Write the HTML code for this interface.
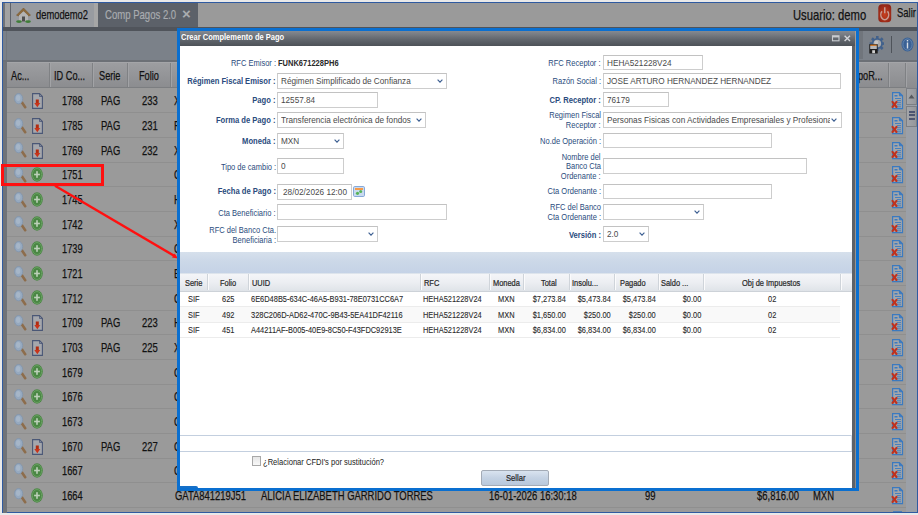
<!DOCTYPE html><html><head><meta charset='utf-8'><style>
*{margin:0;padding:0;box-sizing:border-box}
html,body{width:918px;height:515px;overflow:hidden;background:#fff;font-family:"Liberation Sans",sans-serif}
.a{position:absolute}
.t{position:absolute;white-space:nowrap;transform-origin:0 0;line-height:1}
.tr{position:absolute;white-space:nowrap;transform-origin:100% 0;line-height:1;text-align:right}
</style></head><body><div class="a" style="left:0px;top:0px;width:918px;height:515px;background:#e9e9e9"></div>
<div class="a" style="left:2px;top:2px;width:916px;height:511px;background:#2f5aa0"></div>
<div class="a" style="left:3px;top:3px;width:914px;height:509px;background:#9a9a9a"></div>
<div class="a" style="left:3px;top:3px;width:2px;height:24px;background:#707378"></div>
<div class="a" style="left:5px;top:3px;width:5px;height:24px;background:#a2a2a2"></div>
<div class="a" style="left:10px;top:3px;width:1px;height:24px;background:#5f636a"></div>
<div class="a" style="left:11px;top:3px;width:83px;height:24px;background:#989ba0"></div>
<div class="a" style="left:94px;top:3px;width:4px;height:24px;background:#a6a6a6"></div>
<div class="a" style="left:98px;top:3px;width:100px;height:24px;background:#5c6169"></div>
<div class="a" style="left:3px;top:27px;width:914px;height:4px;background:#50545b"></div>
<div class="a" style="left:3px;top:31px;width:914px;height:30px;background:#7b8189"></div>
<div class="a" style="left:6px;top:31px;width:1px;height:29px;background:#72777e"></div>
<div class="a" style="left:3px;top:62px;width:3px;height:451px;background:#6d7176"></div>
<div class="a" style="left:3px;top:59.5px;width:914px;height:2.5px;background:#6c7076"></div>
<div class="a" style="left:7px;top:62px;width:910px;height:26px;background:linear-gradient(#9d9ea1,#949598 50%,#8b8c8f)"></div>
<div class="a" style="left:7px;top:62px;width:910px;height:1px;background:#a4a5a8"></div>
<div class="a" style="left:3px;top:62px;width:4px;height:451px;background:#707378"></div>
<div class="a" style="left:7px;top:87px;width:899px;height:1px;background:#7c7e81"></div>
<div class="a" style="left:49px;top:63px;width:1px;height:24px;background:#7f8184"></div>
<div class="a" style="left:50px;top:63px;width:1px;height:24px;background:#a2a3a6"></div>
<div class="a" style="left:92px;top:63px;width:1px;height:24px;background:#7f8184"></div>
<div class="a" style="left:93px;top:63px;width:1px;height:24px;background:#a2a3a6"></div>
<div class="a" style="left:127px;top:63px;width:1px;height:24px;background:#7f8184"></div>
<div class="a" style="left:128px;top:63px;width:1px;height:24px;background:#a2a3a6"></div>
<div class="a" style="left:170px;top:63px;width:1px;height:24px;background:#7f8184"></div>
<div class="a" style="left:171px;top:63px;width:1px;height:24px;background:#a2a3a6"></div>
<div class="a" style="left:888px;top:63px;width:1px;height:24px;background:#7f8184"></div>
<div class="a" style="left:889px;top:63px;width:1px;height:24px;background:#a2a3a6"></div>
<div class="a" style="left:905px;top:63px;width:1px;height:24px;background:#7f8184"></div>
<div class="a" style="left:906px;top:63px;width:1px;height:24px;background:#a2a3a6"></div>
<div class="a" style="left:7px;top:112.3px;width:899px;height:1px;background:#8f8f8f"></div>
<div class="a" style="left:7px;top:136.97px;width:899px;height:1px;background:#8f8f8f"></div>
<div class="a" style="left:7px;top:161.64000000000001px;width:899px;height:1px;background:#8f8f8f"></div>
<div class="a" style="left:7px;top:186.31px;width:899px;height:1px;background:#8f8f8f"></div>
<div class="a" style="left:7px;top:210.98000000000002px;width:899px;height:1px;background:#8f8f8f"></div>
<div class="a" style="left:7px;top:235.65000000000003px;width:899px;height:1px;background:#8f8f8f"></div>
<div class="a" style="left:7px;top:260.32px;width:899px;height:1px;background:#8f8f8f"></div>
<div class="a" style="left:7px;top:284.99px;width:899px;height:1px;background:#8f8f8f"></div>
<div class="a" style="left:7px;top:309.66px;width:899px;height:1px;background:#8f8f8f"></div>
<div class="a" style="left:7px;top:334.33000000000004px;width:899px;height:1px;background:#8f8f8f"></div>
<div class="a" style="left:7px;top:359.00000000000006px;width:899px;height:1px;background:#8f8f8f"></div>
<div class="a" style="left:7px;top:383.67px;width:899px;height:1px;background:#8f8f8f"></div>
<div class="a" style="left:7px;top:408.34000000000003px;width:899px;height:1px;background:#8f8f8f"></div>
<div class="a" style="left:7px;top:433.01000000000005px;width:899px;height:1px;background:#8f8f8f"></div>
<div class="a" style="left:7px;top:457.68px;width:899px;height:1px;background:#8f8f8f"></div>
<div class="a" style="left:7px;top:482.35px;width:899px;height:1px;background:#8f8f8f"></div>
<div class="a" style="left:7px;top:507.02000000000004px;width:899px;height:1px;background:#8f8f8f"></div>
<svg class="a" style="left:16px;top:7px" width="15" height="16" viewBox="0 0 15 16"><path d="M7.5 1 L14.5 8.2 L12.5 9 L7.5 4 L2.5 9 L0.5 8.2 Z" fill="#8c6a3c" stroke="#7a5a30" stroke-width=".6"/><path d="M3 8.6 L7.5 4.3 L12 8.6 V14.5 H3 Z" fill="#b3b3b3"/><rect x="6" y="9.5" width="3" height="5" fill="#4f4f4f"/><ellipse cx="3" cy="14.6" rx="2.9" ry="1.4" fill="#3f7d38"/><ellipse cx="12" cy="14.6" rx="2.9" ry="1.4" fill="#3f7d38"/></svg>
<div class="t" style="left:35.6px;top:8px;font-size:13px;color:#111;transform:scaleX(0.72);-webkit-text-stroke:.25px #111">demodemo2</div>
<div class="t" style="left:105px;top:8px;font-size:13px;color:#a9acb0;transform:scaleX(0.735);-webkit-text-stroke:.2px #a9acb0">Comp Pagos 2.0</div>
<div class="t" style="left:182px;top:6px;font-size:15px;color:#a9acb0;font-weight:bold;transform:scaleX(1.0);">&#215;</div>
<div class="t" style="left:792.6px;top:6.95px;font-size:15px;color:#111;transform:scaleX(0.75);-webkit-text-stroke:0.25px #111">Usuario: demo</div>
<svg class="a" style="left:878px;top:4px" width="13.5" height="18.5" viewBox="0 0 13.5 18.5"><defs><radialGradient id="pw" cx="50%" cy="55%" r="60%"><stop offset="0" stop-color="#c8401e"/><stop offset="1" stop-color="#8e2416"/></radialGradient></defs><rect x="0.3" y="0.3" width="12.9" height="17.9" rx="3.8" fill="url(#pw)"/><path d="M4 7.2 A3.9 5 0 1 0 9.5 7.2" fill="none" stroke="#c79c92" stroke-width="1.5"/><line x1="6.75" y1="3.2" x2="6.75" y2="9.2" stroke="#c79c92" stroke-width="1.5"/></svg>
<div class="t" style="left:897px;top:6.15px;font-size:13.5px;color:#111;transform:scaleX(0.7);-webkit-text-stroke:0.25px #111">Salir</div>
<svg class="a" style="left:869px;top:35px" width="15" height="19" viewBox="0 0 15 19"><g transform="translate(8.3 8.6)"><g fill="#41618c"><rect x="-1.3" y="-7.6" width="2.6" height="15.2"/><rect x="-1.3" y="-7.6" width="2.6" height="15.2" transform="rotate(45)"/><rect x="-1.3" y="-7.6" width="2.6" height="15.2" transform="rotate(90)"/><rect x="-1.3" y="-7.6" width="2.6" height="15.2" transform="rotate(135)"/></g><circle r="5.6" fill="#41618c"/><circle r="3.8" fill="#a9a9a9"/><circle cx="-1" cy="-1" r="2" fill="#c4c4c4"/></g><rect x="0.3" y="9.2" width="8.4" height="9.3" fill="#1d1d1d"/><rect x="1.2" y="9.6" width="6.6" height="1.4" fill="#c8782e"/><rect x="1.2" y="11" width="6.6" height="3" fill="#b8b8b8"/><rect x="3.2" y="15.2" width="2.8" height="3" fill="#cfcfcf"/></svg>
<div class="a" style="left:891px;top:36px;width:1px;height:17px;background:#4e535a"></div>
<div class="a" style="left:859px;top:31px;width:4px;height:28px;background:#70757c"></div>
<svg class="a" style="left:901px;top:37px" width="13" height="15" viewBox="0 0 13 15"><ellipse cx="6.5" cy="7.5" rx="6" ry="7" fill="#3a6195"/><ellipse cx="6.5" cy="7.5" rx="4.6" ry="5.6" fill="none" stroke="#6d8db3" stroke-width=".8"/><rect x="5.8" y="3" width="1.4" height="1.4" fill="#d8dde3"/><rect x="5.8" y="5.5" width="1.4" height="6" fill="#d8dde3"/></svg>
<div class="t" style="left:11px;top:69.85px;font-size:12.7px;color:#111;transform:scaleX(0.725);-webkit-text-stroke:0.25px #111">Ac...</div>
<div class="t" style="left:54px;top:69.85px;font-size:12.7px;color:#111;transform:scaleX(0.725);-webkit-text-stroke:0.25px #111">ID Co...</div>
<div class="t" style="left:99.4px;top:69.85px;font-size:12.7px;color:#111;transform:scaleX(0.725);-webkit-text-stroke:0.25px #111">Serie</div>
<div class="t" style="left:139.3px;top:69.85px;font-size:12.7px;color:#111;transform:scaleX(0.725);-webkit-text-stroke:0.25px #111">Folio</div>
<div class="t" style="left:857.5px;top:69.85px;font-size:12.7px;color:#111;transform:scaleX(0.725);-webkit-text-stroke:0.25px #111">poR...</div>
<div class="t" style="left:61.8px;top:94.34px;font-size:13.5px;color:#111;transform:scaleX(0.685);-webkit-text-stroke:0.25px #111">1788</div>
<div class="t" style="left:101px;top:94.34px;font-size:13.5px;color:#111;transform:scaleX(0.7);-webkit-text-stroke:0.25px #111">PAG</div>
<div class="t" style="left:141.5px;top:94.34px;font-size:13.5px;color:#111;transform:scaleX(0.7);-webkit-text-stroke:0.25px #111">233</div>
<div class="t" style="left:174px;top:94.34px;font-size:13.5px;color:#111;transform:scaleX(0.7);-webkit-text-stroke:0.25px #111">X</div>
<svg class="a" style="left:14px;top:93.0px" width="13" height="16" viewBox="0 0 13 16"><line x1="8" y1="9.5" x2="11.2" y2="14.2" stroke="#8d6d4c" stroke-width="2.6" stroke-linecap="round"/><ellipse cx="4.6" cy="5.6" rx="4.1" ry="5.2" fill="#96a9bf" stroke="#8296ad" stroke-width=".8"/><ellipse cx="4.2" cy="5" rx="2.2" ry="3" fill="#a6b6c8"/></svg>
<svg class="a" style="left:32px;top:93.4px" width="11" height="16" viewBox="0 0 11 16"><path d="M0.6 0.6 H7.5 L10.4 3.5 V15.4 H0.6 Z" fill="#a5a7ac" stroke="#4a5776" stroke-width="1.1"/><path d="M7.5 0.6 V3.5 H10.4" fill="none" stroke="#4a5776" stroke-width=".8"/><rect x="3.8" y="6.5" width="3" height="4" fill="#b22c10"/><path d="M2.3 10 H8.3 L5.3 14.2 Z" fill="#c8341a"/></svg>
<svg class="a" style="left:891px;top:92.3px" width="13" height="18" viewBox="0 0 13 18"><path d="M1.6 0.7 H8.4 L11.5 3.8 V16.6 H1.6 Z" fill="#a3a6aa" stroke="#3b7ac0" stroke-width="1.2"/><path d="M8.4 0.7 V3.8 H11.5" fill="#3b7ac0" stroke="#3b7ac0" stroke-width="1"/><rect x="3.5" y="3" width="3" height="1.5" fill="#3b7ac0"/><g stroke="#3b7ac0" stroke-width=".9"><line x1="4" y1="6.5" x2="10" y2="6.5"/><line x1="6" y1="8.6" x2="10" y2="8.6"/><line x1="6" y1="10.7" x2="10" y2="10.7"/><line x1="6" y1="12.8" x2="10" y2="12.8"/><line x1="4" y1="14.8" x2="10" y2="14.8"/></g><g stroke="#c0321e" stroke-width="2.1" stroke-linecap="round"><line x1="1.5" y1="9.8" x2="5.5" y2="15"/><line x1="5.5" y1="9.8" x2="1.5" y2="15"/></g></svg>
<div class="t" style="left:61.8px;top:119.02px;font-size:13.5px;color:#111;transform:scaleX(0.685);-webkit-text-stroke:0.25px #111">1785</div>
<div class="t" style="left:101px;top:119.02px;font-size:13.5px;color:#111;transform:scaleX(0.7);-webkit-text-stroke:0.25px #111">PAG</div>
<div class="t" style="left:141.5px;top:119.02px;font-size:13.5px;color:#111;transform:scaleX(0.7);-webkit-text-stroke:0.25px #111">231</div>
<div class="t" style="left:174px;top:119.02px;font-size:13.5px;color:#111;transform:scaleX(0.7);-webkit-text-stroke:0.25px #111">F</div>
<svg class="a" style="left:14px;top:117.7px" width="13" height="16" viewBox="0 0 13 16"><line x1="8" y1="9.5" x2="11.2" y2="14.2" stroke="#8d6d4c" stroke-width="2.6" stroke-linecap="round"/><ellipse cx="4.6" cy="5.6" rx="4.1" ry="5.2" fill="#96a9bf" stroke="#8296ad" stroke-width=".8"/><ellipse cx="4.2" cy="5" rx="2.2" ry="3" fill="#a6b6c8"/></svg>
<svg class="a" style="left:32px;top:118.1px" width="11" height="16" viewBox="0 0 11 16"><path d="M0.6 0.6 H7.5 L10.4 3.5 V15.4 H0.6 Z" fill="#a5a7ac" stroke="#4a5776" stroke-width="1.1"/><path d="M7.5 0.6 V3.5 H10.4" fill="none" stroke="#4a5776" stroke-width=".8"/><rect x="3.8" y="6.5" width="3" height="4" fill="#b22c10"/><path d="M2.3 10 H8.3 L5.3 14.2 Z" fill="#c8341a"/></svg>
<svg class="a" style="left:891px;top:117.0px" width="13" height="18" viewBox="0 0 13 18"><path d="M1.6 0.7 H8.4 L11.5 3.8 V16.6 H1.6 Z" fill="#a3a6aa" stroke="#3b7ac0" stroke-width="1.2"/><path d="M8.4 0.7 V3.8 H11.5" fill="#3b7ac0" stroke="#3b7ac0" stroke-width="1"/><rect x="3.5" y="3" width="3" height="1.5" fill="#3b7ac0"/><g stroke="#3b7ac0" stroke-width=".9"><line x1="4" y1="6.5" x2="10" y2="6.5"/><line x1="6" y1="8.6" x2="10" y2="8.6"/><line x1="6" y1="10.7" x2="10" y2="10.7"/><line x1="6" y1="12.8" x2="10" y2="12.8"/><line x1="4" y1="14.8" x2="10" y2="14.8"/></g><g stroke="#c0321e" stroke-width="2.1" stroke-linecap="round"><line x1="1.5" y1="9.8" x2="5.5" y2="15"/><line x1="5.5" y1="9.8" x2="1.5" y2="15"/></g></svg>
<div class="t" style="left:61.8px;top:143.69px;font-size:13.5px;color:#111;transform:scaleX(0.685);-webkit-text-stroke:0.25px #111">1769</div>
<div class="t" style="left:101px;top:143.69px;font-size:13.5px;color:#111;transform:scaleX(0.7);-webkit-text-stroke:0.25px #111">PAG</div>
<div class="t" style="left:141.5px;top:143.69px;font-size:13.5px;color:#111;transform:scaleX(0.7);-webkit-text-stroke:0.25px #111">232</div>
<div class="t" style="left:174px;top:143.69px;font-size:13.5px;color:#111;transform:scaleX(0.7);-webkit-text-stroke:0.25px #111">X</div>
<svg class="a" style="left:14px;top:142.3px" width="13" height="16" viewBox="0 0 13 16"><line x1="8" y1="9.5" x2="11.2" y2="14.2" stroke="#8d6d4c" stroke-width="2.6" stroke-linecap="round"/><ellipse cx="4.6" cy="5.6" rx="4.1" ry="5.2" fill="#96a9bf" stroke="#8296ad" stroke-width=".8"/><ellipse cx="4.2" cy="5" rx="2.2" ry="3" fill="#a6b6c8"/></svg>
<svg class="a" style="left:32px;top:142.7px" width="11" height="16" viewBox="0 0 11 16"><path d="M0.6 0.6 H7.5 L10.4 3.5 V15.4 H0.6 Z" fill="#a5a7ac" stroke="#4a5776" stroke-width="1.1"/><path d="M7.5 0.6 V3.5 H10.4" fill="none" stroke="#4a5776" stroke-width=".8"/><rect x="3.8" y="6.5" width="3" height="4" fill="#b22c10"/><path d="M2.3 10 H8.3 L5.3 14.2 Z" fill="#c8341a"/></svg>
<svg class="a" style="left:891px;top:141.6px" width="13" height="18" viewBox="0 0 13 18"><path d="M1.6 0.7 H8.4 L11.5 3.8 V16.6 H1.6 Z" fill="#a3a6aa" stroke="#3b7ac0" stroke-width="1.2"/><path d="M8.4 0.7 V3.8 H11.5" fill="#3b7ac0" stroke="#3b7ac0" stroke-width="1"/><rect x="3.5" y="3" width="3" height="1.5" fill="#3b7ac0"/><g stroke="#3b7ac0" stroke-width=".9"><line x1="4" y1="6.5" x2="10" y2="6.5"/><line x1="6" y1="8.6" x2="10" y2="8.6"/><line x1="6" y1="10.7" x2="10" y2="10.7"/><line x1="6" y1="12.8" x2="10" y2="12.8"/><line x1="4" y1="14.8" x2="10" y2="14.8"/></g><g stroke="#c0321e" stroke-width="2.1" stroke-linecap="round"><line x1="1.5" y1="9.8" x2="5.5" y2="15"/><line x1="5.5" y1="9.8" x2="1.5" y2="15"/></g></svg>
<div class="t" style="left:61.8px;top:168.35px;font-size:13.5px;color:#111;transform:scaleX(0.685);-webkit-text-stroke:0.25px #111">1751</div>
<div class="t" style="left:174px;top:168.35px;font-size:13.5px;color:#111;transform:scaleX(0.7);-webkit-text-stroke:0.25px #111">C</div>
<svg class="a" style="left:14px;top:167.0px" width="13" height="16" viewBox="0 0 13 16"><line x1="8" y1="9.5" x2="11.2" y2="14.2" stroke="#8d6d4c" stroke-width="2.6" stroke-linecap="round"/><ellipse cx="4.6" cy="5.6" rx="4.1" ry="5.2" fill="#96a9bf" stroke="#8296ad" stroke-width=".8"/><ellipse cx="4.2" cy="5" rx="2.2" ry="3" fill="#a6b6c8"/></svg>
<svg class="a" style="left:31px;top:166.8px" width="12" height="15" viewBox="0 0 12 15"><ellipse cx="6" cy="7.5" rx="5.8" ry="7.2" fill="#4a8744"/><ellipse cx="6" cy="7.5" rx="4.7" ry="6" fill="none" stroke="#6da566" stroke-width=".8"/><rect x="5.2" y="4.2" width="1.6" height="6.6" fill="#bcd0b9"/><rect x="3.1" y="6.7" width="5.8" height="1.6" fill="#bcd0b9"/></svg>
<svg class="a" style="left:891px;top:166.3px" width="13" height="18" viewBox="0 0 13 18"><path d="M1.6 0.7 H8.4 L11.5 3.8 V16.6 H1.6 Z" fill="#a3a6aa" stroke="#3b7ac0" stroke-width="1.2"/><path d="M8.4 0.7 V3.8 H11.5" fill="#3b7ac0" stroke="#3b7ac0" stroke-width="1"/><rect x="3.5" y="3" width="3" height="1.5" fill="#3b7ac0"/><g stroke="#3b7ac0" stroke-width=".9"><line x1="4" y1="6.5" x2="10" y2="6.5"/><line x1="6" y1="8.6" x2="10" y2="8.6"/><line x1="6" y1="10.7" x2="10" y2="10.7"/><line x1="6" y1="12.8" x2="10" y2="12.8"/><line x1="4" y1="14.8" x2="10" y2="14.8"/></g><g stroke="#c0321e" stroke-width="2.1" stroke-linecap="round"><line x1="1.5" y1="9.8" x2="5.5" y2="15"/><line x1="5.5" y1="9.8" x2="1.5" y2="15"/></g></svg>
<div class="t" style="left:61.8px;top:193.03px;font-size:13.5px;color:#111;transform:scaleX(0.685);-webkit-text-stroke:0.25px #111">1745</div>
<div class="t" style="left:174px;top:193.03px;font-size:13.5px;color:#111;transform:scaleX(0.7);-webkit-text-stroke:0.25px #111">H</div>
<svg class="a" style="left:14px;top:191.7px" width="13" height="16" viewBox="0 0 13 16"><line x1="8" y1="9.5" x2="11.2" y2="14.2" stroke="#8d6d4c" stroke-width="2.6" stroke-linecap="round"/><ellipse cx="4.6" cy="5.6" rx="4.1" ry="5.2" fill="#96a9bf" stroke="#8296ad" stroke-width=".8"/><ellipse cx="4.2" cy="5" rx="2.2" ry="3" fill="#a6b6c8"/></svg>
<svg class="a" style="left:31px;top:191.5px" width="12" height="15" viewBox="0 0 12 15"><ellipse cx="6" cy="7.5" rx="5.8" ry="7.2" fill="#4a8744"/><ellipse cx="6" cy="7.5" rx="4.7" ry="6" fill="none" stroke="#6da566" stroke-width=".8"/><rect x="5.2" y="4.2" width="1.6" height="6.6" fill="#bcd0b9"/><rect x="3.1" y="6.7" width="5.8" height="1.6" fill="#bcd0b9"/></svg>
<svg class="a" style="left:891px;top:191.0px" width="13" height="18" viewBox="0 0 13 18"><path d="M1.6 0.7 H8.4 L11.5 3.8 V16.6 H1.6 Z" fill="#a3a6aa" stroke="#3b7ac0" stroke-width="1.2"/><path d="M8.4 0.7 V3.8 H11.5" fill="#3b7ac0" stroke="#3b7ac0" stroke-width="1"/><rect x="3.5" y="3" width="3" height="1.5" fill="#3b7ac0"/><g stroke="#3b7ac0" stroke-width=".9"><line x1="4" y1="6.5" x2="10" y2="6.5"/><line x1="6" y1="8.6" x2="10" y2="8.6"/><line x1="6" y1="10.7" x2="10" y2="10.7"/><line x1="6" y1="12.8" x2="10" y2="12.8"/><line x1="4" y1="14.8" x2="10" y2="14.8"/></g><g stroke="#c0321e" stroke-width="2.1" stroke-linecap="round"><line x1="1.5" y1="9.8" x2="5.5" y2="15"/><line x1="5.5" y1="9.8" x2="1.5" y2="15"/></g></svg>
<div class="t" style="left:61.8px;top:217.7px;font-size:13.5px;color:#111;transform:scaleX(0.685);-webkit-text-stroke:0.25px #111">1742</div>
<div class="t" style="left:174px;top:217.7px;font-size:13.5px;color:#111;transform:scaleX(0.7);-webkit-text-stroke:0.25px #111">X</div>
<svg class="a" style="left:14px;top:216.4px" width="13" height="16" viewBox="0 0 13 16"><line x1="8" y1="9.5" x2="11.2" y2="14.2" stroke="#8d6d4c" stroke-width="2.6" stroke-linecap="round"/><ellipse cx="4.6" cy="5.6" rx="4.1" ry="5.2" fill="#96a9bf" stroke="#8296ad" stroke-width=".8"/><ellipse cx="4.2" cy="5" rx="2.2" ry="3" fill="#a6b6c8"/></svg>
<svg class="a" style="left:31px;top:216.2px" width="12" height="15" viewBox="0 0 12 15"><ellipse cx="6" cy="7.5" rx="5.8" ry="7.2" fill="#4a8744"/><ellipse cx="6" cy="7.5" rx="4.7" ry="6" fill="none" stroke="#6da566" stroke-width=".8"/><rect x="5.2" y="4.2" width="1.6" height="6.6" fill="#bcd0b9"/><rect x="3.1" y="6.7" width="5.8" height="1.6" fill="#bcd0b9"/></svg>
<svg class="a" style="left:891px;top:215.7px" width="13" height="18" viewBox="0 0 13 18"><path d="M1.6 0.7 H8.4 L11.5 3.8 V16.6 H1.6 Z" fill="#a3a6aa" stroke="#3b7ac0" stroke-width="1.2"/><path d="M8.4 0.7 V3.8 H11.5" fill="#3b7ac0" stroke="#3b7ac0" stroke-width="1"/><rect x="3.5" y="3" width="3" height="1.5" fill="#3b7ac0"/><g stroke="#3b7ac0" stroke-width=".9"><line x1="4" y1="6.5" x2="10" y2="6.5"/><line x1="6" y1="8.6" x2="10" y2="8.6"/><line x1="6" y1="10.7" x2="10" y2="10.7"/><line x1="6" y1="12.8" x2="10" y2="12.8"/><line x1="4" y1="14.8" x2="10" y2="14.8"/></g><g stroke="#c0321e" stroke-width="2.1" stroke-linecap="round"><line x1="1.5" y1="9.8" x2="5.5" y2="15"/><line x1="5.5" y1="9.8" x2="1.5" y2="15"/></g></svg>
<div class="t" style="left:61.8px;top:242.37px;font-size:13.5px;color:#111;transform:scaleX(0.685);-webkit-text-stroke:0.25px #111">1739</div>
<div class="t" style="left:174px;top:242.37px;font-size:13.5px;color:#111;transform:scaleX(0.7);-webkit-text-stroke:0.25px #111">C</div>
<svg class="a" style="left:14px;top:241.0px" width="13" height="16" viewBox="0 0 13 16"><line x1="8" y1="9.5" x2="11.2" y2="14.2" stroke="#8d6d4c" stroke-width="2.6" stroke-linecap="round"/><ellipse cx="4.6" cy="5.6" rx="4.1" ry="5.2" fill="#96a9bf" stroke="#8296ad" stroke-width=".8"/><ellipse cx="4.2" cy="5" rx="2.2" ry="3" fill="#a6b6c8"/></svg>
<svg class="a" style="left:31px;top:240.8px" width="12" height="15" viewBox="0 0 12 15"><ellipse cx="6" cy="7.5" rx="5.8" ry="7.2" fill="#4a8744"/><ellipse cx="6" cy="7.5" rx="4.7" ry="6" fill="none" stroke="#6da566" stroke-width=".8"/><rect x="5.2" y="4.2" width="1.6" height="6.6" fill="#bcd0b9"/><rect x="3.1" y="6.7" width="5.8" height="1.6" fill="#bcd0b9"/></svg>
<svg class="a" style="left:891px;top:240.3px" width="13" height="18" viewBox="0 0 13 18"><path d="M1.6 0.7 H8.4 L11.5 3.8 V16.6 H1.6 Z" fill="#a3a6aa" stroke="#3b7ac0" stroke-width="1.2"/><path d="M8.4 0.7 V3.8 H11.5" fill="#3b7ac0" stroke="#3b7ac0" stroke-width="1"/><rect x="3.5" y="3" width="3" height="1.5" fill="#3b7ac0"/><g stroke="#3b7ac0" stroke-width=".9"><line x1="4" y1="6.5" x2="10" y2="6.5"/><line x1="6" y1="8.6" x2="10" y2="8.6"/><line x1="6" y1="10.7" x2="10" y2="10.7"/><line x1="6" y1="12.8" x2="10" y2="12.8"/><line x1="4" y1="14.8" x2="10" y2="14.8"/></g><g stroke="#c0321e" stroke-width="2.1" stroke-linecap="round"><line x1="1.5" y1="9.8" x2="5.5" y2="15"/><line x1="5.5" y1="9.8" x2="1.5" y2="15"/></g></svg>
<div class="t" style="left:61.8px;top:267.04px;font-size:13.5px;color:#111;transform:scaleX(0.685);-webkit-text-stroke:0.25px #111">1721</div>
<div class="t" style="left:174px;top:267.04px;font-size:13.5px;color:#111;transform:scaleX(0.7);-webkit-text-stroke:0.25px #111">E</div>
<svg class="a" style="left:14px;top:265.7px" width="13" height="16" viewBox="0 0 13 16"><line x1="8" y1="9.5" x2="11.2" y2="14.2" stroke="#8d6d4c" stroke-width="2.6" stroke-linecap="round"/><ellipse cx="4.6" cy="5.6" rx="4.1" ry="5.2" fill="#96a9bf" stroke="#8296ad" stroke-width=".8"/><ellipse cx="4.2" cy="5" rx="2.2" ry="3" fill="#a6b6c8"/></svg>
<svg class="a" style="left:31px;top:265.5px" width="12" height="15" viewBox="0 0 12 15"><ellipse cx="6" cy="7.5" rx="5.8" ry="7.2" fill="#4a8744"/><ellipse cx="6" cy="7.5" rx="4.7" ry="6" fill="none" stroke="#6da566" stroke-width=".8"/><rect x="5.2" y="4.2" width="1.6" height="6.6" fill="#bcd0b9"/><rect x="3.1" y="6.7" width="5.8" height="1.6" fill="#bcd0b9"/></svg>
<svg class="a" style="left:891px;top:265.0px" width="13" height="18" viewBox="0 0 13 18"><path d="M1.6 0.7 H8.4 L11.5 3.8 V16.6 H1.6 Z" fill="#a3a6aa" stroke="#3b7ac0" stroke-width="1.2"/><path d="M8.4 0.7 V3.8 H11.5" fill="#3b7ac0" stroke="#3b7ac0" stroke-width="1"/><rect x="3.5" y="3" width="3" height="1.5" fill="#3b7ac0"/><g stroke="#3b7ac0" stroke-width=".9"><line x1="4" y1="6.5" x2="10" y2="6.5"/><line x1="6" y1="8.6" x2="10" y2="8.6"/><line x1="6" y1="10.7" x2="10" y2="10.7"/><line x1="6" y1="12.8" x2="10" y2="12.8"/><line x1="4" y1="14.8" x2="10" y2="14.8"/></g><g stroke="#c0321e" stroke-width="2.1" stroke-linecap="round"><line x1="1.5" y1="9.8" x2="5.5" y2="15"/><line x1="5.5" y1="9.8" x2="1.5" y2="15"/></g></svg>
<div class="t" style="left:61.8px;top:291.71px;font-size:13.5px;color:#111;transform:scaleX(0.685);-webkit-text-stroke:0.25px #111">1712</div>
<div class="t" style="left:174px;top:291.71px;font-size:13.5px;color:#111;transform:scaleX(0.7);-webkit-text-stroke:0.25px #111">C</div>
<svg class="a" style="left:14px;top:290.4px" width="13" height="16" viewBox="0 0 13 16"><line x1="8" y1="9.5" x2="11.2" y2="14.2" stroke="#8d6d4c" stroke-width="2.6" stroke-linecap="round"/><ellipse cx="4.6" cy="5.6" rx="4.1" ry="5.2" fill="#96a9bf" stroke="#8296ad" stroke-width=".8"/><ellipse cx="4.2" cy="5" rx="2.2" ry="3" fill="#a6b6c8"/></svg>
<svg class="a" style="left:31px;top:290.2px" width="12" height="15" viewBox="0 0 12 15"><ellipse cx="6" cy="7.5" rx="5.8" ry="7.2" fill="#4a8744"/><ellipse cx="6" cy="7.5" rx="4.7" ry="6" fill="none" stroke="#6da566" stroke-width=".8"/><rect x="5.2" y="4.2" width="1.6" height="6.6" fill="#bcd0b9"/><rect x="3.1" y="6.7" width="5.8" height="1.6" fill="#bcd0b9"/></svg>
<svg class="a" style="left:891px;top:289.7px" width="13" height="18" viewBox="0 0 13 18"><path d="M1.6 0.7 H8.4 L11.5 3.8 V16.6 H1.6 Z" fill="#a3a6aa" stroke="#3b7ac0" stroke-width="1.2"/><path d="M8.4 0.7 V3.8 H11.5" fill="#3b7ac0" stroke="#3b7ac0" stroke-width="1"/><rect x="3.5" y="3" width="3" height="1.5" fill="#3b7ac0"/><g stroke="#3b7ac0" stroke-width=".9"><line x1="4" y1="6.5" x2="10" y2="6.5"/><line x1="6" y1="8.6" x2="10" y2="8.6"/><line x1="6" y1="10.7" x2="10" y2="10.7"/><line x1="6" y1="12.8" x2="10" y2="12.8"/><line x1="4" y1="14.8" x2="10" y2="14.8"/></g><g stroke="#c0321e" stroke-width="2.1" stroke-linecap="round"><line x1="1.5" y1="9.8" x2="5.5" y2="15"/><line x1="5.5" y1="9.8" x2="1.5" y2="15"/></g></svg>
<div class="t" style="left:61.8px;top:316.38px;font-size:13.5px;color:#111;transform:scaleX(0.685);-webkit-text-stroke:0.25px #111">1709</div>
<div class="t" style="left:101px;top:316.38px;font-size:13.5px;color:#111;transform:scaleX(0.7);-webkit-text-stroke:0.25px #111">PAG</div>
<div class="t" style="left:141.5px;top:316.38px;font-size:13.5px;color:#111;transform:scaleX(0.7);-webkit-text-stroke:0.25px #111">223</div>
<div class="t" style="left:174px;top:316.38px;font-size:13.5px;color:#111;transform:scaleX(0.7);-webkit-text-stroke:0.25px #111">H</div>
<svg class="a" style="left:14px;top:315.0px" width="13" height="16" viewBox="0 0 13 16"><line x1="8" y1="9.5" x2="11.2" y2="14.2" stroke="#8d6d4c" stroke-width="2.6" stroke-linecap="round"/><ellipse cx="4.6" cy="5.6" rx="4.1" ry="5.2" fill="#96a9bf" stroke="#8296ad" stroke-width=".8"/><ellipse cx="4.2" cy="5" rx="2.2" ry="3" fill="#a6b6c8"/></svg>
<svg class="a" style="left:32px;top:315.4px" width="11" height="16" viewBox="0 0 11 16"><path d="M0.6 0.6 H7.5 L10.4 3.5 V15.4 H0.6 Z" fill="#a5a7ac" stroke="#4a5776" stroke-width="1.1"/><path d="M7.5 0.6 V3.5 H10.4" fill="none" stroke="#4a5776" stroke-width=".8"/><rect x="3.8" y="6.5" width="3" height="4" fill="#b22c10"/><path d="M2.3 10 H8.3 L5.3 14.2 Z" fill="#c8341a"/></svg>
<svg class="a" style="left:891px;top:314.3px" width="13" height="18" viewBox="0 0 13 18"><path d="M1.6 0.7 H8.4 L11.5 3.8 V16.6 H1.6 Z" fill="#a3a6aa" stroke="#3b7ac0" stroke-width="1.2"/><path d="M8.4 0.7 V3.8 H11.5" fill="#3b7ac0" stroke="#3b7ac0" stroke-width="1"/><rect x="3.5" y="3" width="3" height="1.5" fill="#3b7ac0"/><g stroke="#3b7ac0" stroke-width=".9"><line x1="4" y1="6.5" x2="10" y2="6.5"/><line x1="6" y1="8.6" x2="10" y2="8.6"/><line x1="6" y1="10.7" x2="10" y2="10.7"/><line x1="6" y1="12.8" x2="10" y2="12.8"/><line x1="4" y1="14.8" x2="10" y2="14.8"/></g><g stroke="#c0321e" stroke-width="2.1" stroke-linecap="round"><line x1="1.5" y1="9.8" x2="5.5" y2="15"/><line x1="5.5" y1="9.8" x2="1.5" y2="15"/></g></svg>
<div class="t" style="left:61.8px;top:341.05px;font-size:13.5px;color:#111;transform:scaleX(0.685);-webkit-text-stroke:0.25px #111">1703</div>
<div class="t" style="left:101px;top:341.05px;font-size:13.5px;color:#111;transform:scaleX(0.7);-webkit-text-stroke:0.25px #111">PAG</div>
<div class="t" style="left:141.5px;top:341.05px;font-size:13.5px;color:#111;transform:scaleX(0.7);-webkit-text-stroke:0.25px #111">225</div>
<div class="t" style="left:174px;top:341.05px;font-size:13.5px;color:#111;transform:scaleX(0.7);-webkit-text-stroke:0.25px #111">X</div>
<svg class="a" style="left:14px;top:339.7px" width="13" height="16" viewBox="0 0 13 16"><line x1="8" y1="9.5" x2="11.2" y2="14.2" stroke="#8d6d4c" stroke-width="2.6" stroke-linecap="round"/><ellipse cx="4.6" cy="5.6" rx="4.1" ry="5.2" fill="#96a9bf" stroke="#8296ad" stroke-width=".8"/><ellipse cx="4.2" cy="5" rx="2.2" ry="3" fill="#a6b6c8"/></svg>
<svg class="a" style="left:32px;top:340.1px" width="11" height="16" viewBox="0 0 11 16"><path d="M0.6 0.6 H7.5 L10.4 3.5 V15.4 H0.6 Z" fill="#a5a7ac" stroke="#4a5776" stroke-width="1.1"/><path d="M7.5 0.6 V3.5 H10.4" fill="none" stroke="#4a5776" stroke-width=".8"/><rect x="3.8" y="6.5" width="3" height="4" fill="#b22c10"/><path d="M2.3 10 H8.3 L5.3 14.2 Z" fill="#c8341a"/></svg>
<svg class="a" style="left:891px;top:339.0px" width="13" height="18" viewBox="0 0 13 18"><path d="M1.6 0.7 H8.4 L11.5 3.8 V16.6 H1.6 Z" fill="#a3a6aa" stroke="#3b7ac0" stroke-width="1.2"/><path d="M8.4 0.7 V3.8 H11.5" fill="#3b7ac0" stroke="#3b7ac0" stroke-width="1"/><rect x="3.5" y="3" width="3" height="1.5" fill="#3b7ac0"/><g stroke="#3b7ac0" stroke-width=".9"><line x1="4" y1="6.5" x2="10" y2="6.5"/><line x1="6" y1="8.6" x2="10" y2="8.6"/><line x1="6" y1="10.7" x2="10" y2="10.7"/><line x1="6" y1="12.8" x2="10" y2="12.8"/><line x1="4" y1="14.8" x2="10" y2="14.8"/></g><g stroke="#c0321e" stroke-width="2.1" stroke-linecap="round"><line x1="1.5" y1="9.8" x2="5.5" y2="15"/><line x1="5.5" y1="9.8" x2="1.5" y2="15"/></g></svg>
<div class="t" style="left:61.8px;top:365.72px;font-size:13.5px;color:#111;transform:scaleX(0.685);-webkit-text-stroke:0.25px #111">1679</div>
<div class="t" style="left:174px;top:365.72px;font-size:13.5px;color:#111;transform:scaleX(0.7);-webkit-text-stroke:0.25px #111">C</div>
<svg class="a" style="left:14px;top:364.4px" width="13" height="16" viewBox="0 0 13 16"><line x1="8" y1="9.5" x2="11.2" y2="14.2" stroke="#8d6d4c" stroke-width="2.6" stroke-linecap="round"/><ellipse cx="4.6" cy="5.6" rx="4.1" ry="5.2" fill="#96a9bf" stroke="#8296ad" stroke-width=".8"/><ellipse cx="4.2" cy="5" rx="2.2" ry="3" fill="#a6b6c8"/></svg>
<svg class="a" style="left:31px;top:364.2px" width="12" height="15" viewBox="0 0 12 15"><ellipse cx="6" cy="7.5" rx="5.8" ry="7.2" fill="#4a8744"/><ellipse cx="6" cy="7.5" rx="4.7" ry="6" fill="none" stroke="#6da566" stroke-width=".8"/><rect x="5.2" y="4.2" width="1.6" height="6.6" fill="#bcd0b9"/><rect x="3.1" y="6.7" width="5.8" height="1.6" fill="#bcd0b9"/></svg>
<svg class="a" style="left:891px;top:363.7px" width="13" height="18" viewBox="0 0 13 18"><path d="M1.6 0.7 H8.4 L11.5 3.8 V16.6 H1.6 Z" fill="#a3a6aa" stroke="#3b7ac0" stroke-width="1.2"/><path d="M8.4 0.7 V3.8 H11.5" fill="#3b7ac0" stroke="#3b7ac0" stroke-width="1"/><rect x="3.5" y="3" width="3" height="1.5" fill="#3b7ac0"/><g stroke="#3b7ac0" stroke-width=".9"><line x1="4" y1="6.5" x2="10" y2="6.5"/><line x1="6" y1="8.6" x2="10" y2="8.6"/><line x1="6" y1="10.7" x2="10" y2="10.7"/><line x1="6" y1="12.8" x2="10" y2="12.8"/><line x1="4" y1="14.8" x2="10" y2="14.8"/></g><g stroke="#c0321e" stroke-width="2.1" stroke-linecap="round"><line x1="1.5" y1="9.8" x2="5.5" y2="15"/><line x1="5.5" y1="9.8" x2="1.5" y2="15"/></g></svg>
<div class="t" style="left:61.8px;top:390.39px;font-size:13.5px;color:#111;transform:scaleX(0.685);-webkit-text-stroke:0.25px #111">1676</div>
<div class="t" style="left:174px;top:390.39px;font-size:13.5px;color:#111;transform:scaleX(0.7);-webkit-text-stroke:0.25px #111">C</div>
<svg class="a" style="left:14px;top:389.0px" width="13" height="16" viewBox="0 0 13 16"><line x1="8" y1="9.5" x2="11.2" y2="14.2" stroke="#8d6d4c" stroke-width="2.6" stroke-linecap="round"/><ellipse cx="4.6" cy="5.6" rx="4.1" ry="5.2" fill="#96a9bf" stroke="#8296ad" stroke-width=".8"/><ellipse cx="4.2" cy="5" rx="2.2" ry="3" fill="#a6b6c8"/></svg>
<svg class="a" style="left:31px;top:388.8px" width="12" height="15" viewBox="0 0 12 15"><ellipse cx="6" cy="7.5" rx="5.8" ry="7.2" fill="#4a8744"/><ellipse cx="6" cy="7.5" rx="4.7" ry="6" fill="none" stroke="#6da566" stroke-width=".8"/><rect x="5.2" y="4.2" width="1.6" height="6.6" fill="#bcd0b9"/><rect x="3.1" y="6.7" width="5.8" height="1.6" fill="#bcd0b9"/></svg>
<svg class="a" style="left:891px;top:388.3px" width="13" height="18" viewBox="0 0 13 18"><path d="M1.6 0.7 H8.4 L11.5 3.8 V16.6 H1.6 Z" fill="#a3a6aa" stroke="#3b7ac0" stroke-width="1.2"/><path d="M8.4 0.7 V3.8 H11.5" fill="#3b7ac0" stroke="#3b7ac0" stroke-width="1"/><rect x="3.5" y="3" width="3" height="1.5" fill="#3b7ac0"/><g stroke="#3b7ac0" stroke-width=".9"><line x1="4" y1="6.5" x2="10" y2="6.5"/><line x1="6" y1="8.6" x2="10" y2="8.6"/><line x1="6" y1="10.7" x2="10" y2="10.7"/><line x1="6" y1="12.8" x2="10" y2="12.8"/><line x1="4" y1="14.8" x2="10" y2="14.8"/></g><g stroke="#c0321e" stroke-width="2.1" stroke-linecap="round"><line x1="1.5" y1="9.8" x2="5.5" y2="15"/><line x1="5.5" y1="9.8" x2="1.5" y2="15"/></g></svg>
<div class="t" style="left:61.8px;top:415.06px;font-size:13.5px;color:#111;transform:scaleX(0.685);-webkit-text-stroke:0.25px #111">1673</div>
<div class="t" style="left:174px;top:415.06px;font-size:13.5px;color:#111;transform:scaleX(0.7);-webkit-text-stroke:0.25px #111">C</div>
<svg class="a" style="left:14px;top:413.7px" width="13" height="16" viewBox="0 0 13 16"><line x1="8" y1="9.5" x2="11.2" y2="14.2" stroke="#8d6d4c" stroke-width="2.6" stroke-linecap="round"/><ellipse cx="4.6" cy="5.6" rx="4.1" ry="5.2" fill="#96a9bf" stroke="#8296ad" stroke-width=".8"/><ellipse cx="4.2" cy="5" rx="2.2" ry="3" fill="#a6b6c8"/></svg>
<svg class="a" style="left:31px;top:413.5px" width="12" height="15" viewBox="0 0 12 15"><ellipse cx="6" cy="7.5" rx="5.8" ry="7.2" fill="#4a8744"/><ellipse cx="6" cy="7.5" rx="4.7" ry="6" fill="none" stroke="#6da566" stroke-width=".8"/><rect x="5.2" y="4.2" width="1.6" height="6.6" fill="#bcd0b9"/><rect x="3.1" y="6.7" width="5.8" height="1.6" fill="#bcd0b9"/></svg>
<svg class="a" style="left:891px;top:413.0px" width="13" height="18" viewBox="0 0 13 18"><path d="M1.6 0.7 H8.4 L11.5 3.8 V16.6 H1.6 Z" fill="#a3a6aa" stroke="#3b7ac0" stroke-width="1.2"/><path d="M8.4 0.7 V3.8 H11.5" fill="#3b7ac0" stroke="#3b7ac0" stroke-width="1"/><rect x="3.5" y="3" width="3" height="1.5" fill="#3b7ac0"/><g stroke="#3b7ac0" stroke-width=".9"><line x1="4" y1="6.5" x2="10" y2="6.5"/><line x1="6" y1="8.6" x2="10" y2="8.6"/><line x1="6" y1="10.7" x2="10" y2="10.7"/><line x1="6" y1="12.8" x2="10" y2="12.8"/><line x1="4" y1="14.8" x2="10" y2="14.8"/></g><g stroke="#c0321e" stroke-width="2.1" stroke-linecap="round"><line x1="1.5" y1="9.8" x2="5.5" y2="15"/><line x1="5.5" y1="9.8" x2="1.5" y2="15"/></g></svg>
<div class="t" style="left:61.8px;top:439.73px;font-size:13.5px;color:#111;transform:scaleX(0.685);-webkit-text-stroke:0.25px #111">1670</div>
<div class="t" style="left:101px;top:439.73px;font-size:13.5px;color:#111;transform:scaleX(0.7);-webkit-text-stroke:0.25px #111">PAG</div>
<div class="t" style="left:141.5px;top:439.73px;font-size:13.5px;color:#111;transform:scaleX(0.7);-webkit-text-stroke:0.25px #111">227</div>
<div class="t" style="left:174px;top:439.73px;font-size:13.5px;color:#111;transform:scaleX(0.7);-webkit-text-stroke:0.25px #111">C</div>
<svg class="a" style="left:14px;top:438.4px" width="13" height="16" viewBox="0 0 13 16"><line x1="8" y1="9.5" x2="11.2" y2="14.2" stroke="#8d6d4c" stroke-width="2.6" stroke-linecap="round"/><ellipse cx="4.6" cy="5.6" rx="4.1" ry="5.2" fill="#96a9bf" stroke="#8296ad" stroke-width=".8"/><ellipse cx="4.2" cy="5" rx="2.2" ry="3" fill="#a6b6c8"/></svg>
<svg class="a" style="left:32px;top:438.8px" width="11" height="16" viewBox="0 0 11 16"><path d="M0.6 0.6 H7.5 L10.4 3.5 V15.4 H0.6 Z" fill="#a5a7ac" stroke="#4a5776" stroke-width="1.1"/><path d="M7.5 0.6 V3.5 H10.4" fill="none" stroke="#4a5776" stroke-width=".8"/><rect x="3.8" y="6.5" width="3" height="4" fill="#b22c10"/><path d="M2.3 10 H8.3 L5.3 14.2 Z" fill="#c8341a"/></svg>
<svg class="a" style="left:891px;top:437.7px" width="13" height="18" viewBox="0 0 13 18"><path d="M1.6 0.7 H8.4 L11.5 3.8 V16.6 H1.6 Z" fill="#a3a6aa" stroke="#3b7ac0" stroke-width="1.2"/><path d="M8.4 0.7 V3.8 H11.5" fill="#3b7ac0" stroke="#3b7ac0" stroke-width="1"/><rect x="3.5" y="3" width="3" height="1.5" fill="#3b7ac0"/><g stroke="#3b7ac0" stroke-width=".9"><line x1="4" y1="6.5" x2="10" y2="6.5"/><line x1="6" y1="8.6" x2="10" y2="8.6"/><line x1="6" y1="10.7" x2="10" y2="10.7"/><line x1="6" y1="12.8" x2="10" y2="12.8"/><line x1="4" y1="14.8" x2="10" y2="14.8"/></g><g stroke="#c0321e" stroke-width="2.1" stroke-linecap="round"><line x1="1.5" y1="9.8" x2="5.5" y2="15"/><line x1="5.5" y1="9.8" x2="1.5" y2="15"/></g></svg>
<div class="t" style="left:61.8px;top:464.4px;font-size:13.5px;color:#111;transform:scaleX(0.685);-webkit-text-stroke:0.25px #111">1667</div>
<div class="t" style="left:174px;top:464.4px;font-size:13.5px;color:#111;transform:scaleX(0.7);-webkit-text-stroke:0.25px #111">C</div>
<svg class="a" style="left:14px;top:463.1px" width="13" height="16" viewBox="0 0 13 16"><line x1="8" y1="9.5" x2="11.2" y2="14.2" stroke="#8d6d4c" stroke-width="2.6" stroke-linecap="round"/><ellipse cx="4.6" cy="5.6" rx="4.1" ry="5.2" fill="#96a9bf" stroke="#8296ad" stroke-width=".8"/><ellipse cx="4.2" cy="5" rx="2.2" ry="3" fill="#a6b6c8"/></svg>
<svg class="a" style="left:31px;top:462.9px" width="12" height="15" viewBox="0 0 12 15"><ellipse cx="6" cy="7.5" rx="5.8" ry="7.2" fill="#4a8744"/><ellipse cx="6" cy="7.5" rx="4.7" ry="6" fill="none" stroke="#6da566" stroke-width=".8"/><rect x="5.2" y="4.2" width="1.6" height="6.6" fill="#bcd0b9"/><rect x="3.1" y="6.7" width="5.8" height="1.6" fill="#bcd0b9"/></svg>
<svg class="a" style="left:891px;top:462.4px" width="13" height="18" viewBox="0 0 13 18"><path d="M1.6 0.7 H8.4 L11.5 3.8 V16.6 H1.6 Z" fill="#a3a6aa" stroke="#3b7ac0" stroke-width="1.2"/><path d="M8.4 0.7 V3.8 H11.5" fill="#3b7ac0" stroke="#3b7ac0" stroke-width="1"/><rect x="3.5" y="3" width="3" height="1.5" fill="#3b7ac0"/><g stroke="#3b7ac0" stroke-width=".9"><line x1="4" y1="6.5" x2="10" y2="6.5"/><line x1="6" y1="8.6" x2="10" y2="8.6"/><line x1="6" y1="10.7" x2="10" y2="10.7"/><line x1="6" y1="12.8" x2="10" y2="12.8"/><line x1="4" y1="14.8" x2="10" y2="14.8"/></g><g stroke="#c0321e" stroke-width="2.1" stroke-linecap="round"><line x1="1.5" y1="9.8" x2="5.5" y2="15"/><line x1="5.5" y1="9.8" x2="1.5" y2="15"/></g></svg>
<div class="t" style="left:61.8px;top:489.07px;font-size:13.5px;color:#111;transform:scaleX(0.685);-webkit-text-stroke:0.25px #111">1664</div>
<svg class="a" style="left:14px;top:487.7px" width="13" height="16" viewBox="0 0 13 16"><line x1="8" y1="9.5" x2="11.2" y2="14.2" stroke="#8d6d4c" stroke-width="2.6" stroke-linecap="round"/><ellipse cx="4.6" cy="5.6" rx="4.1" ry="5.2" fill="#96a9bf" stroke="#8296ad" stroke-width=".8"/><ellipse cx="4.2" cy="5" rx="2.2" ry="3" fill="#a6b6c8"/></svg>
<svg class="a" style="left:31px;top:487.5px" width="12" height="15" viewBox="0 0 12 15"><ellipse cx="6" cy="7.5" rx="5.8" ry="7.2" fill="#4a8744"/><ellipse cx="6" cy="7.5" rx="4.7" ry="6" fill="none" stroke="#6da566" stroke-width=".8"/><rect x="5.2" y="4.2" width="1.6" height="6.6" fill="#bcd0b9"/><rect x="3.1" y="6.7" width="5.8" height="1.6" fill="#bcd0b9"/></svg>
<svg class="a" style="left:891px;top:487.0px" width="13" height="18" viewBox="0 0 13 18"><path d="M1.6 0.7 H8.4 L11.5 3.8 V16.6 H1.6 Z" fill="#a3a6aa" stroke="#3b7ac0" stroke-width="1.2"/><path d="M8.4 0.7 V3.8 H11.5" fill="#3b7ac0" stroke="#3b7ac0" stroke-width="1"/><rect x="3.5" y="3" width="3" height="1.5" fill="#3b7ac0"/><g stroke="#3b7ac0" stroke-width=".9"><line x1="4" y1="6.5" x2="10" y2="6.5"/><line x1="6" y1="8.6" x2="10" y2="8.6"/><line x1="6" y1="10.7" x2="10" y2="10.7"/><line x1="6" y1="12.8" x2="10" y2="12.8"/><line x1="4" y1="14.8" x2="10" y2="14.8"/></g><g stroke="#c0321e" stroke-width="2.1" stroke-linecap="round"><line x1="1.5" y1="9.8" x2="5.5" y2="15"/><line x1="5.5" y1="9.8" x2="1.5" y2="15"/></g></svg>
<div class="a" style="left:893px;top:511px;width:9px;height:1px;background:#4f7fb5"></div>
<div class="t" style="left:174.8px;top:489.07px;font-size:13.5px;color:#111;transform:scaleX(0.7);-webkit-text-stroke:0.25px #111">GATA841219J51</div>
<div class="t" style="left:260.7px;top:489.07px;font-size:13.5px;color:#111;transform:scaleX(0.7);-webkit-text-stroke:0.25px #111">ALICIA ELIZABETH GARRIDO TORRES</div>
<div class="t" style="left:489px;top:489.07px;font-size:13.5px;color:#111;transform:scaleX(0.7);-webkit-text-stroke:0.25px #111">16-01-2026 16:30:18</div>
<div class="t" style="left:645px;top:489.07px;font-size:13.5px;color:#111;transform:scaleX(0.7);-webkit-text-stroke:0.25px #111">99</div>
<div class="t" style="left:757px;top:489.07px;font-size:13.5px;color:#111;transform:scaleX(0.7);-webkit-text-stroke:0.25px #111">$6,816.00</div>
<div class="t" style="left:813px;top:489.07px;font-size:13.5px;color:#111;transform:scaleX(0.7);-webkit-text-stroke:0.25px #111">MXN</div>
<div class="a" style="left:906px;top:88px;width:11px;height:424px;background:#9ba0a8"></div>
<div class="a" style="left:906px;top:88px;width:11px;height:17px;background:linear-gradient(90deg,#a3a5a9,#95979b);border:1px solid #7c7f84"></div>
<svg class="a" style="left:908px;top:94px" width="7" height="5" viewBox="0 0 7 5"><path d="M0.5 4.5 L3.5 0.5 L6.5 4.5 Z" fill="#55585d"/></svg>
<div class="a" style="left:906px;top:106px;width:11px;height:20.5px;background:linear-gradient(90deg,#a3a5a9,#95979b);border:1px solid #7c7f84"></div>
<div class="a" style="left:909px;top:110.8px;width:6px;height:2px;background:#4c5570"></div>
<div class="a" style="left:909px;top:114.4px;width:6px;height:2px;background:#4c5570"></div>
<div class="a" style="left:909px;top:118px;width:6px;height:2px;background:#4c5570"></div>
<div class="a" style="left:1px;top:164px;width:103px;height:22px;border:3px solid #ff1010"></div>
<svg class="a" style="left:0;top:0" width="918" height="515"><line x1="55" y1="185.8" x2="175" y2="256.3" stroke="#ff1010" stroke-width="2.4"/><path d="M178 258.4 L172 257.6 L174.6 253.4 Z" fill="#ff1010"/></svg>
<div class="a" style="left:177px;top:28px;width:682px;height:463px;background:#0a6fd0"></div>
<div class="a" style="left:180px;top:31px;width:676px;height:457px;background:#5c6168"></div>
<div class="a" style="left:180px;top:31px;width:676px;height:15px;background:linear-gradient(#858a91,#62676e 55%,#4d5258)"></div>
<div class="a" style="left:180px;top:46px;width:672px;height:442px;background:#fff"></div>
<div class="a" style="left:855px;top:31px;width:1px;height:457px;background:linear-gradient(#a39d98,#8f8a86)"></div>
<div class="t" style="left:181px;top:33px;font-size:9px;color:#fff;font-weight:bold;transform:scaleX(0.835);">Crear Complemento de Pago</div>
<svg class="a" style="left:831px;top:35px" width="21" height="7" viewBox="0 0 21 7"><rect x="1.5" y="0.8" width="6.5" height="5" fill="none" stroke="#c9ccd0" stroke-width="1.1"/><rect x="1.5" y="0.8" width="6.5" height="1.6" fill="#c9ccd0"/><path d="M13.6 0.8 L19 6 M19 0.8 L13.6 6" stroke="#d2d4d8" stroke-width="1.4"/></svg>
<div class="tr" style="right:642.3px;top:58.8px;font-size:9px;color:#2a4b7d;transform:scaleX(0.835);">RFC Emisor :</div>
<div class="t" style="left:278px;top:58.5px;font-size:9px;color:#2a2a2a;font-weight:bold;transform:scaleX(0.835);">FUNK671228PH6</div>
<div class="tr" style="right:642.3px;top:77px;font-size:9px;color:#2a4b7d;font-weight:bold;transform:scaleX(0.845);">Régimen Fiscal Emisor :</div>
<div class="a" style="left:277px;top:73px;width:170px;height:16px;background:#fff;border:1px solid #cdcdcd;border-top-color:#c2c2c2"></div>
<div class="t" style="left:281px;top:76.6px;font-size:9px;color:#4a4a4a;transform:scaleX(0.91);">Régimen Simplificado de Confianza</div>
<svg class="a" style="left:436.7px;top:78.9px" width="6" height="4" viewBox="0 0 6 4"><path d="M0.6 0.7 L3 3.2 L5.4 0.7" fill="none" stroke="#3d5f92" stroke-width="1.15"/></svg>
<div class="tr" style="right:642.3px;top:96px;font-size:9px;color:#2a4b7d;font-weight:bold;transform:scaleX(0.845);">Pago :</div>
<div class="a" style="left:277px;top:92px;width:101px;height:16px;background:#fff;border:1px solid #cdcdcd;border-top-color:#c2c2c2"></div>
<div class="t" style="left:281px;top:95.6px;font-size:9px;color:#4a4a4a;transform:scaleX(0.91);">12557.84</div>
<div class="tr" style="right:642.3px;top:116px;font-size:9px;color:#2a4b7d;font-weight:bold;transform:scaleX(0.845);">Forma de Pago :</div>
<div class="a" style="left:277px;top:112px;width:149px;height:16px;background:#fff;border:1px solid #cdcdcd;border-top-color:#c2c2c2"></div>
<div class="t" style="left:281px;top:115.6px;font-size:9px;color:#4a4a4a;transform:scaleX(0.91);">Transferencia electrónica de fondos</div>
<svg class="a" style="left:415.7px;top:117.9px" width="6" height="4" viewBox="0 0 6 4"><path d="M0.6 0.7 L3 3.2 L5.4 0.7" fill="none" stroke="#3d5f92" stroke-width="1.15"/></svg>
<div class="tr" style="right:642.3px;top:137px;font-size:9px;color:#2a4b7d;font-weight:bold;transform:scaleX(0.845);">Moneda :</div>
<div class="a" style="left:277px;top:133px;width:67px;height:16px;background:#fff;border:1px solid #cdcdcd;border-top-color:#c2c2c2"></div>
<div class="t" style="left:281px;top:136.6px;font-size:9px;color:#4a4a4a;transform:scaleX(0.91);">MXN</div>
<svg class="a" style="left:333.7px;top:138.9px" width="6" height="4" viewBox="0 0 6 4"><path d="M0.6 0.7 L3 3.2 L5.4 0.7" fill="none" stroke="#3d5f92" stroke-width="1.15"/></svg>
<div class="tr" style="right:642.3px;top:162.7px;font-size:9px;color:#2a4b7d;transform:scaleX(0.835);">Tipo de cambio :</div>
<div class="a" style="left:277px;top:158px;width:67px;height:16px;background:#fff;border:1px solid #cdcdcd;border-top-color:#c2c2c2"></div>
<div class="t" style="left:281px;top:161.6px;font-size:9px;color:#4a4a4a;transform:scaleX(0.91);">0</div>
<div class="tr" style="right:642.3px;top:187px;font-size:9px;color:#2a4b7d;font-weight:bold;transform:scaleX(0.845);">Fecha de Pago :</div>
<div class="a" style="left:277px;top:184px;width:74.5px;height:15.5px;background:#fff;border:1px solid #cdcdcd;border-top-color:#c2c2c2"></div>
<div class="t" style="left:283.3px;top:187.6px;font-size:9px;color:#4a4a4a;transform:scaleX(0.913);">28/02/2026 12:00</div>
<svg class="a" style="left:353px;top:186px" width="12" height="11" viewBox="0 0 12 11"><rect x="0.5" y="0.5" width="11" height="10" rx="1.2" fill="#c9daf0" stroke="#86a9d8" stroke-width="1"/><rect x="2" y="2" width="8" height="2" fill="#f59a4a"/><circle cx="4.5" cy="7.3" r="1.6" fill="#58b458"/><circle cx="7.7" cy="5.6" r="1.5" fill="#58b458"/></svg>
<div class="tr" style="right:642.3px;top:208.5px;font-size:9px;color:#2a4b7d;transform:scaleX(0.835);">Cta Beneficiario :</div>
<div class="a" style="left:277px;top:204px;width:170px;height:16px;background:#fff;border:1px solid #cdcdcd;border-top-color:#c2c2c2"></div>
<div class="tr" style="right:642.3px;top:226px;font-size:9px;color:#2a4b7d;transform:scaleX(0.835);">RFC del Banco Cta.</div>
<div class="tr" style="right:642.3px;top:235.8px;font-size:9px;color:#2a4b7d;transform:scaleX(0.835);">Beneficiaria :</div>
<div class="a" style="left:277px;top:226px;width:101px;height:16px;background:#fff;border:1px solid #cdcdcd;border-top-color:#c2c2c2"></div>
<svg class="a" style="left:367.7px;top:231.9px" width="6" height="4" viewBox="0 0 6 4"><path d="M0.6 0.7 L3 3.2 L5.4 0.7" fill="none" stroke="#3d5f92" stroke-width="1.15"/></svg>
<div class="tr" style="right:317px;top:59px;font-size:9px;color:#2a4b7d;transform:scaleX(0.835);">RFC Receptor :</div>
<div class="a" style="left:603px;top:55px;width:100px;height:15px;background:#fff;border:1px solid #cdcdcd;border-top-color:#c2c2c2"></div>
<div class="t" style="left:607px;top:58.6px;font-size:9px;color:#4a4a4a;transform:scaleX(0.91);">HEHA521228V24</div>
<div class="tr" style="right:317px;top:77px;font-size:9px;color:#2a4b7d;transform:scaleX(0.835);">Razón Social :</div>
<div class="a" style="left:603px;top:73px;width:238px;height:16px;background:#fff;border:1px solid #cdcdcd;border-top-color:#c2c2c2"></div>
<div class="t" style="left:607px;top:76.6px;font-size:9px;color:#4a4a4a;transform:scaleX(0.91);">JOSE ARTURO HERNANDEZ HERNANDEZ</div>
<div class="tr" style="right:317px;top:96px;font-size:9px;color:#2a4b7d;font-weight:bold;transform:scaleX(0.845);">CP. Receptor :</div>
<div class="a" style="left:603px;top:92px;width:66px;height:15px;background:#fff;border:1px solid #cdcdcd;border-top-color:#c2c2c2"></div>
<div class="t" style="left:607px;top:95.6px;font-size:9px;color:#4a4a4a;transform:scaleX(0.91);">76179</div>
<div class="tr" style="right:317px;top:111.1px;font-size:9px;color:#2a4b7d;transform:scaleX(0.835);">Regimen Fiscal</div>
<div class="tr" style="right:317px;top:121px;font-size:9px;color:#2a4b7d;transform:scaleX(0.835);">Receptor :</div>
<div class="a" style="left:603px;top:112px;width:238.5px;height:16px;background:#fff;border:1px solid #cdcdcd;border-top-color:#c2c2c2"></div>
<div class="t" style="left:607px;top:115.6px;font-size:9px;color:#4a4a4a;transform:scaleX(0.915);">Personas Fisicas con Actividades Empresariales y Profesiona</div>
<div class="a" style="left:830px;top:113px;width:10.5px;height:14px;background:#fff"></div>
<svg class="a" style="left:831.2px;top:117.9px" width="6" height="4" viewBox="0 0 6 4"><path d="M0.6 0.7 L3 3.2 L5.4 0.7" fill="none" stroke="#3d5f92" stroke-width="1.15"/></svg>
<div class="tr" style="right:317px;top:137px;font-size:9px;color:#2a4b7d;transform:scaleX(0.835);">No.de Operación :</div>
<div class="a" style="left:603px;top:133px;width:169px;height:15px;background:#fff;border:1px solid #cdcdcd;border-top-color:#c2c2c2"></div>
<div class="tr" style="right:317px;top:152.6px;font-size:9px;color:#2a4b7d;transform:scaleX(0.835);">Nombre del</div>
<div class="tr" style="right:317px;top:162.3px;font-size:9px;color:#2a4b7d;transform:scaleX(0.835);">Banco Cta</div>
<div class="tr" style="right:317px;top:172px;font-size:9px;color:#2a4b7d;transform:scaleX(0.835);">Ordenante :</div>
<div class="a" style="left:603px;top:158px;width:204px;height:16px;background:#fff;border:1px solid #cdcdcd;border-top-color:#c2c2c2"></div>
<div class="tr" style="right:317px;top:187px;font-size:9px;color:#2a4b7d;transform:scaleX(0.835);">Cta Ordenante :</div>
<div class="a" style="left:603px;top:184px;width:169px;height:15px;background:#fff;border:1px solid #cdcdcd;border-top-color:#c2c2c2"></div>
<div class="tr" style="right:317px;top:203.3px;font-size:9px;color:#2a4b7d;transform:scaleX(0.835);">RFC del Banco</div>
<div class="tr" style="right:317px;top:212.9px;font-size:9px;color:#2a4b7d;transform:scaleX(0.835);">Cta Ordenante :</div>
<div class="a" style="left:603px;top:204px;width:101px;height:16px;background:#fff;border:1px solid #cdcdcd;border-top-color:#c2c2c2"></div>
<svg class="a" style="left:693.7px;top:209.9px" width="6" height="4" viewBox="0 0 6 4"><path d="M0.6 0.7 L3 3.2 L5.4 0.7" fill="none" stroke="#3d5f92" stroke-width="1.15"/></svg>
<div class="tr" style="right:317px;top:230.5px;font-size:9px;color:#2a4b7d;font-weight:bold;transform:scaleX(0.845);">Versión :</div>
<div class="a" style="left:603px;top:226px;width:46px;height:16px;background:#fff;border:1px solid #cdcdcd;border-top-color:#c2c2c2"></div>
<div class="t" style="left:607px;top:229.6px;font-size:9px;color:#4a4a4a;transform:scaleX(0.91);">2.0</div>
<svg class="a" style="left:638.7px;top:231.9px" width="6" height="4" viewBox="0 0 6 4"><path d="M0.6 0.7 L3 3.2 L5.4 0.7" fill="none" stroke="#3d5f92" stroke-width="1.15"/></svg>
<div class="a" style="left:180px;top:252px;width:672px;height:22px;background:linear-gradient(#d6e0ec,#ccd8e8 40%,#c4d2e6)"></div>
<div class="a" style="left:180px;top:273px;width:672px;height:1px;background:#dde4ec"></div>
<div class="a" style="left:180px;top:274px;width:672px;height:17px;background:linear-gradient(#f4f5f8,#eceef2 50%,#dfe3e8)"></div>
<div class="a" style="left:180px;top:290.5px;width:672px;height:1px;background:#cdd2d8"></div>
<div class="a" style="left:206.5px;top:274px;width:1px;height:16px;background:#cfd4da"></div>
<div class="a" style="left:207.5px;top:274px;width:1px;height:16px;background:#fbfbfc"></div>
<div class="a" style="left:247.5px;top:274px;width:1px;height:16px;background:#cfd4da"></div>
<div class="a" style="left:248.5px;top:274px;width:1px;height:16px;background:#fbfbfc"></div>
<div class="a" style="left:420px;top:274px;width:1px;height:16px;background:#cfd4da"></div>
<div class="a" style="left:421px;top:274px;width:1px;height:16px;background:#fbfbfc"></div>
<div class="a" style="left:488.5px;top:274px;width:1px;height:16px;background:#cfd4da"></div>
<div class="a" style="left:489.5px;top:274px;width:1px;height:16px;background:#fbfbfc"></div>
<div class="a" style="left:522.5px;top:274px;width:1px;height:16px;background:#cfd4da"></div>
<div class="a" style="left:523.5px;top:274px;width:1px;height:16px;background:#fbfbfc"></div>
<div class="a" style="left:568.5px;top:274px;width:1px;height:16px;background:#cfd4da"></div>
<div class="a" style="left:569.5px;top:274px;width:1px;height:16px;background:#fbfbfc"></div>
<div class="a" style="left:613.5px;top:274px;width:1px;height:16px;background:#cfd4da"></div>
<div class="a" style="left:614.5px;top:274px;width:1px;height:16px;background:#fbfbfc"></div>
<div class="a" style="left:657.5px;top:274px;width:1px;height:16px;background:#cfd4da"></div>
<div class="a" style="left:658.5px;top:274px;width:1px;height:16px;background:#fbfbfc"></div>
<div class="a" style="left:703px;top:274px;width:1px;height:16px;background:#cfd4da"></div>
<div class="a" style="left:704px;top:274px;width:1px;height:16px;background:#fbfbfc"></div>
<div class="a" style="left:839.5px;top:274px;width:1px;height:16px;background:#cfd4da"></div>
<div class="a" style="left:840.5px;top:274px;width:1px;height:16px;background:#fbfbfc"></div>
<div class="t" style="left:184.6px;top:279.0px;font-size:8.5px;color:#2a2a2a;transform:scaleX(0.875);-webkit-text-stroke:0.22px #2a2a2a">Serie</div>
<div class="t" style="left:219.9px;top:279.0px;font-size:8.5px;color:#2a2a2a;transform:scaleX(0.875);-webkit-text-stroke:0.22px #2a2a2a">Folio</div>
<div class="t" style="left:251.6px;top:279.0px;font-size:8.5px;color:#2a2a2a;transform:scaleX(0.875);-webkit-text-stroke:0.22px #2a2a2a">UUID</div>
<div class="t" style="left:423.6px;top:279.0px;font-size:8.5px;color:#2a2a2a;transform:scaleX(0.875);-webkit-text-stroke:0.22px #2a2a2a">RFC</div>
<div class="t" style="left:492.7px;top:279.0px;font-size:8.5px;color:#2a2a2a;transform:scaleX(0.875);-webkit-text-stroke:0.22px #2a2a2a">Moneda</div>
<div class="t" style="left:540.7px;top:279.0px;font-size:8.5px;color:#2a2a2a;transform:scaleX(0.875);-webkit-text-stroke:0.22px #2a2a2a">Total</div>
<div class="t" style="left:571.8px;top:279.0px;font-size:8.5px;color:#2a2a2a;transform:scaleX(0.875);-webkit-text-stroke:0.22px #2a2a2a">Insolu...</div>
<div class="t" style="left:619.8px;top:279.0px;font-size:8.5px;color:#2a2a2a;transform:scaleX(0.875);-webkit-text-stroke:0.22px #2a2a2a">Pagado</div>
<div class="t" style="left:661.2px;top:279.0px;font-size:8.5px;color:#2a2a2a;transform:scaleX(0.875);-webkit-text-stroke:0.22px #2a2a2a">Saldo ...</div>
<div class="t" style="left:742.2px;top:279.0px;font-size:8.5px;color:#2a2a2a;transform:scaleX(0.875);-webkit-text-stroke:0.22px #2a2a2a">Obj de Impuestos</div>
<div class="a" style="left:180px;top:306.0px;width:660px;height:1px;background:#ececec"></div>
<div class="t" style="left:187.6px;top:295.19px;font-size:8.5px;color:#2a2a2a;transform:scaleX(0.875);-webkit-text-stroke:0.1px #2a2a2a">SIF</div>
<div class="t" style="left:221.6px;top:295.19px;font-size:8.5px;color:#2a2a2a;transform:scaleX(0.875);-webkit-text-stroke:0.1px #2a2a2a">625</div>
<div class="t" style="left:250.6px;top:295.19px;font-size:8.5px;color:#2a2a2a;transform:scaleX(0.875);-webkit-text-stroke:0.1px #2a2a2a">6E6D48B5-634C-46A5-B931-78E0731CC6A7</div>
<div class="t" style="left:422.6px;top:295.19px;font-size:8.5px;color:#2a2a2a;transform:scaleX(0.875);-webkit-text-stroke:0.1px #2a2a2a">HEHA521228V24</div>
<div class="t" style="left:497.6px;top:295.19px;font-size:8.5px;color:#2a2a2a;transform:scaleX(0.875);-webkit-text-stroke:0.1px #2a2a2a">MXN</div>
<div class="tr" style="right:352px;top:295.19px;font-size:8.5px;color:#2a2a2a;transform:scaleX(0.875);-webkit-text-stroke:0.1px #2a2a2a">$7,273.84</div>
<div class="tr" style="right:307.29999999999995px;top:295.19px;font-size:8.5px;color:#2a2a2a;transform:scaleX(0.875);-webkit-text-stroke:0.1px #2a2a2a">$5,473.84</div>
<div class="tr" style="right:262.4px;top:295.19px;font-size:8.5px;color:#2a2a2a;transform:scaleX(0.875);-webkit-text-stroke:0.1px #2a2a2a">$5,473.84</div>
<div class="tr" style="right:216.79999999999995px;top:295.19px;font-size:8.5px;color:#2a2a2a;transform:scaleX(0.875);-webkit-text-stroke:0.1px #2a2a2a">$0.00</div>
<div class="t" style="left:767.6px;top:295.19px;font-size:8.5px;color:#2a2a2a;transform:scaleX(0.875);-webkit-text-stroke:0.1px #2a2a2a">02</div>
<div class="a" style="left:180px;top:306.6px;width:660px;height:15.6px;background:#f9f9f9"></div>
<div class="a" style="left:180px;top:321.6px;width:660px;height:1px;background:#ececec"></div>
<div class="t" style="left:187.6px;top:310.8px;font-size:8.5px;color:#2a2a2a;transform:scaleX(0.875);-webkit-text-stroke:0.1px #2a2a2a">SIF</div>
<div class="t" style="left:221.6px;top:310.8px;font-size:8.5px;color:#2a2a2a;transform:scaleX(0.875);-webkit-text-stroke:0.1px #2a2a2a">492</div>
<div class="t" style="left:250.6px;top:310.8px;font-size:8.5px;color:#2a2a2a;transform:scaleX(0.875);-webkit-text-stroke:0.1px #2a2a2a">328C206D-AD62-470C-9B43-5EA41DF42116</div>
<div class="t" style="left:422.6px;top:310.8px;font-size:8.5px;color:#2a2a2a;transform:scaleX(0.875);-webkit-text-stroke:0.1px #2a2a2a">HEHA521228V24</div>
<div class="t" style="left:497.6px;top:310.8px;font-size:8.5px;color:#2a2a2a;transform:scaleX(0.875);-webkit-text-stroke:0.1px #2a2a2a">MXN</div>
<div class="tr" style="right:352px;top:310.8px;font-size:8.5px;color:#2a2a2a;transform:scaleX(0.875);-webkit-text-stroke:0.1px #2a2a2a">$1,650.00</div>
<div class="tr" style="right:307.29999999999995px;top:310.8px;font-size:8.5px;color:#2a2a2a;transform:scaleX(0.875);-webkit-text-stroke:0.1px #2a2a2a">$250.00</div>
<div class="tr" style="right:262.4px;top:310.8px;font-size:8.5px;color:#2a2a2a;transform:scaleX(0.875);-webkit-text-stroke:0.1px #2a2a2a">$250.00</div>
<div class="tr" style="right:216.79999999999995px;top:310.8px;font-size:8.5px;color:#2a2a2a;transform:scaleX(0.875);-webkit-text-stroke:0.1px #2a2a2a">$0.00</div>
<div class="t" style="left:767.6px;top:310.8px;font-size:8.5px;color:#2a2a2a;transform:scaleX(0.875);-webkit-text-stroke:0.1px #2a2a2a">02</div>
<div class="a" style="left:180px;top:337.2px;width:660px;height:1px;background:#ececec"></div>
<div class="t" style="left:187.6px;top:326.39px;font-size:8.5px;color:#2a2a2a;transform:scaleX(0.875);-webkit-text-stroke:0.1px #2a2a2a">SIF</div>
<div class="t" style="left:221.6px;top:326.39px;font-size:8.5px;color:#2a2a2a;transform:scaleX(0.875);-webkit-text-stroke:0.1px #2a2a2a">451</div>
<div class="t" style="left:250.6px;top:326.39px;font-size:8.5px;color:#2a2a2a;transform:scaleX(0.875);-webkit-text-stroke:0.1px #2a2a2a">A44211AF-B005-40E9-8C50-F43FDC92913E</div>
<div class="t" style="left:422.6px;top:326.39px;font-size:8.5px;color:#2a2a2a;transform:scaleX(0.875);-webkit-text-stroke:0.1px #2a2a2a">HEHA521228V24</div>
<div class="t" style="left:497.6px;top:326.39px;font-size:8.5px;color:#2a2a2a;transform:scaleX(0.875);-webkit-text-stroke:0.1px #2a2a2a">MXN</div>
<div class="tr" style="right:352px;top:326.39px;font-size:8.5px;color:#2a2a2a;transform:scaleX(0.875);-webkit-text-stroke:0.1px #2a2a2a">$6,834.00</div>
<div class="tr" style="right:307.29999999999995px;top:326.39px;font-size:8.5px;color:#2a2a2a;transform:scaleX(0.875);-webkit-text-stroke:0.1px #2a2a2a">$6,834.00</div>
<div class="tr" style="right:262.4px;top:326.39px;font-size:8.5px;color:#2a2a2a;transform:scaleX(0.875);-webkit-text-stroke:0.1px #2a2a2a">$6,834.00</div>
<div class="tr" style="right:216.79999999999995px;top:326.39px;font-size:8.5px;color:#2a2a2a;transform:scaleX(0.875);-webkit-text-stroke:0.1px #2a2a2a">$0.00</div>
<div class="t" style="left:767.6px;top:326.39px;font-size:8.5px;color:#2a2a2a;transform:scaleX(0.875);-webkit-text-stroke:0.1px #2a2a2a">02</div>
<div class="a" style="left:180px;top:486.2px;width:18px;height:2px;background:#1670c8;border-radius:0 2px 0 0"></div>
<div class="a" style="left:180px;top:434.6px;width:672px;height:1.4px;background:#c3cfdf"></div>
<div class="a" style="left:850.6px;top:435px;width:1px;height:16px;background:#d8e0ea"></div>
<div class="a" style="left:180px;top:450.8px;width:672px;height:1.4px;background:#c3cfdf"></div>
<div class="a" style="left:251.6px;top:456.4px;width:9px;height:10px;background:linear-gradient(#e6e6e6,#f8f8f8);border:1px solid #a8a8a8"></div>
<div class="t" style="left:263px;top:457.7px;font-size:9px;color:#222;transform:scaleX(0.842);">¿Relacionar CFDI's por sustitución?</div>
<div class="a" style="left:481.3px;top:470.3px;width:67.6px;height:15.4px;background:linear-gradient(#d9e3ef,#c4d2e3 50%,#b8c8dc);border:1px solid #a3abb6;border-radius:2px"></div>
<div class="t" style="left:505.8px;top:473.6px;font-size:9px;color:#1e1e1e;transform:scaleX(0.845);-webkit-text-stroke:.2px #1e1e1e">Sellar</div></body></html>
